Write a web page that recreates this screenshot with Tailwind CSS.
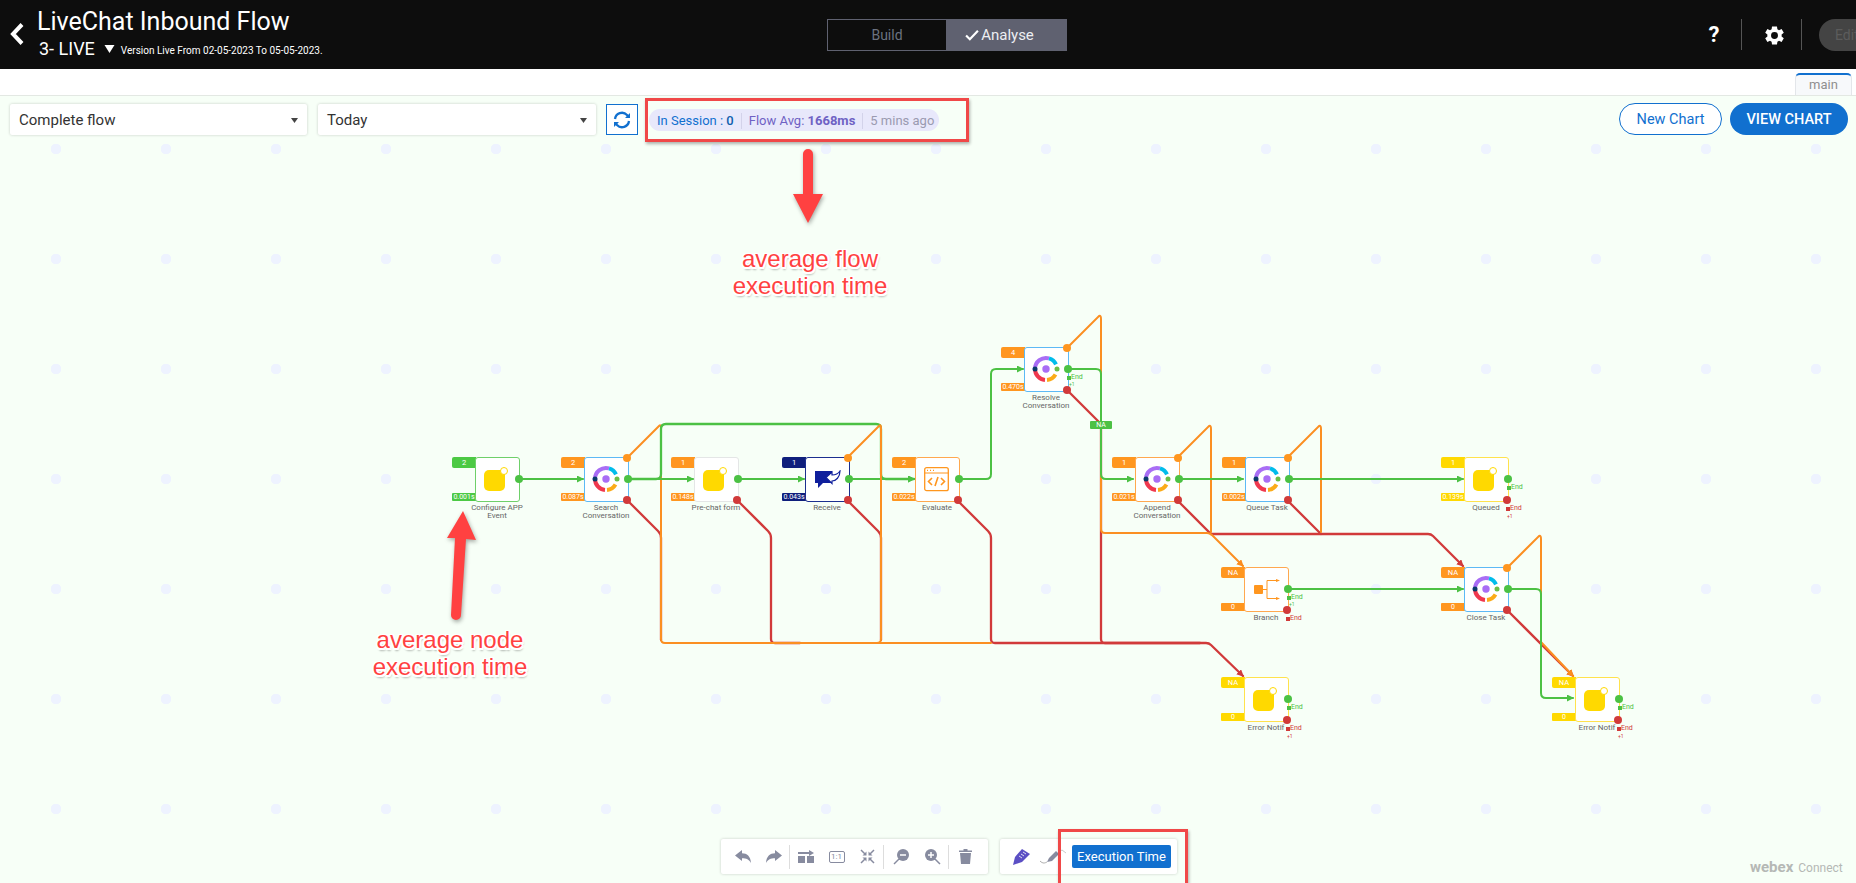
<!DOCTYPE html>
<html lang="en">
<head>
    <meta charset="UTF-8">
    <meta name="viewport" content="width=device-width, initial-scale=1.0">
    <title>LiveChat Inbound Flow</title>
    <script src="https://cdn.jsdelivr.net/npm/@tailwindcss/browser@4"></script>
</head>
<body class="bg-white h-[883px] w-[1856px] overflow-hidden flex flex-col font-['Roboto',sans-serif]">
    <!-- Header -->
    <header class="h-[69px] bg-[#0d0d0d] flex items-start text-white shrink-0">
        <div class="w-[827px] flex items-start shrink-0">
            <svg class="w-[14px] h-[22px] ml-[10px] mt-[23px]" viewBox="0 0 14 22" fill="none" stroke="#fff" stroke-width="4"><path d="M12 1.500 3 11l9 9.500"/></svg>
            <div class="ml-[13px]">
                <h1 class="text-[25px] leading-[30px] mt-[7px] whitespace-nowrap">LiveChat Inbound Flow</h1>
                <div class="flex items-center mt-[2px] ml-[2px]">
                    <span class="text-[18px] leading-[20px] whitespace-nowrap">3- LIVE</span>
                    <svg class="w-[11px] h-[8px] ml-[9px]" viewBox="0 0 10 8" fill="#fff"><path d="M0 0h10L5 8z"/></svg>
                    <span class="text-[10px] ml-[6px] mt-[2px] whitespace-nowrap">Version Live From 02-05-2023 To 05-05-2023.</span>
                </div>
            </div>
        </div>
        <div class="mt-[19px] w-[240px] h-[32px] flex text-[14px] border border-[#5f6170]">
            <div class="w-[118px] flex items-center justify-center text-[#6b7280]">Build</div>
            <div class="flex-1 flex items-center justify-center bg-[#5f6170] text-[#eceef2] text-[15px] gap-[2px] pr-[13px]">
                <svg class="w-[14px] h-[12px]" viewBox="0 0 13 11" fill="none" stroke="#fff" stroke-width="2"><path d="M1 6l3.500 3.500L12 1.500"/></svg>
                Analyse
            </div>
        </div>
        <div class="flex-1 flex items-start justify-end">
            <span class="mt-[23px] text-[22px] leading-[24px] font-bold w-[16px] text-center">?</span>
            <div class="w-px h-[31px] bg-[#555] mt-[19px] ml-[19px]"></div>
            <svg class="w-[23px] h-[23px] mt-[24px] ml-[21px]" viewBox="0 0 24 24" fill="#fff"><path d="M19.400 13a7.600 7.600 0 0 0 0-2l2.300-1.800-2.300-3.900-2.700 1.100a7.500 7.500 0 0 0-1.700-1L14.600 2.500H9.400L9 5.400a7.500 7.500 0 0 0-1.700 1L4.600 5.300 2.300 9.200 4.600 11a7.600 7.600 0 0 0 0 2l-2.300 1.800 2.300 3.900 2.700-1.100c.5.400 1.100.8 1.700 1l.4 2.900h5.200l.4-2.900c.6-.2 1.200-.6 1.700-1l2.700 1.100 2.300-3.900zM12 15.600a3.600 3.600 0 1 1 0-7.200 3.600 3.600 0 0 1 0 7.200z"/></svg>
            <div class="w-px h-[31px] bg-[#555] mt-[19px] ml-[15px]"></div>
            <div class="mt-[19px] ml-[17px] w-[37px] h-[32px] rounded-l-[16px] bg-[#444] text-[#5c5c5c] text-[14px] leading-[32px] pl-[16px] overflow-hidden whitespace-nowrap">Edit</div>
        </div>
    </header>

    <!-- Tab strip -->
    <div class="h-[27px] shrink-0 bg-white border-b border-[#e3e8e3] flex justify-end items-end pr-[4px]">
        <div class="w-[57px] h-[22px] border-t-2 border-x border-t-[#1170cf] border-x-[#e3e6ea] rounded-t-[5px] bg-[#f7f9fb] text-[#8f8f8f] text-[13px] leading-[20px] text-center">main</div>
    </div>

    <!-- Canvas -->
    <main id="canvas" class="relative flex-1 bg-[#f7fff7] bg-[radial-gradient(circle,#eef3ff_5px,transparent_5.500px)] bg-[size:110px_110px] bg-[position:1px_-2px] overflow-hidden">
        <div class="flex items-start pt-[8px] pl-[10px] pr-[8px]">
            <div class="w-[297px] h-[31px] bg-white shadow-[0_0_3px_rgba(0,0,0,0.2)] rounded-[2px] flex items-center justify-between pl-[9px] pr-[9px] pt-[2px] text-[15px] text-[#333]">
                Complete flow
                <svg class="w-[7px] h-[5px]" viewBox="0 0 7 5" fill="#444"><path d="M0 0h7L3.500 5z"/></svg>
            </div>
            <div class="w-[278px] h-[31px] ml-[11px] bg-white shadow-[0_0_3px_rgba(0,0,0,0.2)] rounded-[2px] flex items-center justify-between pl-[9px] pr-[9px] pt-[2px] text-[15px] text-[#333]">
                Today
                <svg class="w-[7px] h-[5px]" viewBox="0 0 7 5" fill="#444"><path d="M0 0h7L3.500 5z"/></svg>
            </div>
            <div class="w-[32px] h-[31px] ml-[10px] bg-white border border-[#1170cf] flex items-center justify-center">
                <svg class="w-[20px] h-[20px]" viewBox="0 0 20 20" fill="none" stroke="#1170cf" stroke-width="2.300"><path d="M3 9a7 7 0 0 1 12-4l1.500 2"/><path d="M17 11a7 7 0 0 1-12 4l-1.500-2"/><path d="M13 8h5V3z" fill="#1170cf" stroke="none"/><path d="M7 12H2v5z" fill="#1170cf" stroke="none"/></svg>
            </div>
            <div class="w-[290px] h-[22px] ml-[11px] mt-[5px] pt-px rounded-full bg-[#e8e8fb] flex items-center pl-[8px] text-[13px] whitespace-nowrap">
                <span class="text-[#1170cf]">In Session : <b class="text-[#0f5fae] font-medium">0</b></span>
                <span class="w-px h-[16px] bg-[#d3d3ea] mx-[7px]"></span>
                <span class="text-[#6f62c4]">Flow Avg: <b class="font-bold">1668ms</b></span>
                <span class="w-px h-[16px] bg-[#d3d3ea] mx-[7px]"></span>
                <span class="text-[#9a9ab0]">5 mins ago</span>
            </div>
            <button class="ml-auto w-[103px] h-[32px] -mt-[1px] pt-px rounded-full border border-[#1170cf] bg-white text-[#1170cf] text-[14.500px]">New Chart</button>
            <button class="ml-[8px] w-[118px] h-[32px] -mt-[1px] pt-px rounded-full bg-[#1170cf] text-white text-[14.500px] font-medium">VIEW CHART</button>
        </div>

        <!-- Connectors -->
        <svg class="absolute inset-0 w-[1856px] h-[787px]" viewBox="0 96 1856 787" fill="none" stroke-linecap="round">
            <defs>
                <marker id="ag" markerUnits="userSpaceOnUse" markerWidth="8" markerHeight="8" refX="6" refY="3.500" orient="auto"><path d="M0 0 7 3.500 0 7z" fill="#4cc144"/></marker>
                <marker id="ao" markerUnits="userSpaceOnUse" markerWidth="8" markerHeight="8" refX="6" refY="3.500" orient="auto"><path d="M0 0 7 3.500 0 7z" fill="#fb8c1e"/></marker>
                <marker id="ar" markerUnits="userSpaceOnUse" markerWidth="8" markerHeight="8" refX="6" refY="3.500" orient="auto"><path d="M0 0 7 3.500 0 7z" fill="#d13a3a"/></marker>
            </defs>
            <!-- failure paths -->
            <g stroke="#d13a3a" stroke-width="2.300">
                <path d="M627 500 658 531Q661 534 661 538V640"/>
                <path d="M737 500 768 531Q771 534 771 538V639Q771 643 775 643H800"/>
                <path d="M847 500 878 531Q881 534 881 538V640"/>
                <path d="M957 500 988 531Q991 534 991 538V639Q991 643 995 643H1206Q1209 643 1211 645L1243 676" marker-end="url(#ar)"/>
                <path d="M1067 390 1098 421Q1101 424 1101 428V639Q1101 643 1105 643H1200"/>
                <path d="M1177 500 1211 534H1428Q1431 534 1433 536L1463 566" marker-end="url(#ar)"/>
                <path d="M1287 500 1321 534"/>
                <path d="M1507 610 1573 676" marker-end="url(#ar)"/>
            </g>
            <!-- timeout paths -->
            <g stroke="#fb8f22" stroke-width="2">
                <path d="M627 458 659 426Q661 424 661 428V639Q661 643 665 643H991"/>
                <path d="M1067 348 1099 316Q1101 315 1101 319V529Q1101 533 1105 533H1207Q1210 533 1212 535L1243 566" marker-end="url(#ao)"/>
                <path d="M1177 458 1209 426Q1211 425 1211 429V532"/>
                <path d="M1287 458 1319 426Q1321 425 1321 429V532"/>
                <path d="M1507 568 1539 536Q1541 535 1541 539V642L1573 676" marker-end="url(#ao)"/>
            </g>
            <!-- success paths -->
            <g stroke="#4cc144" stroke-width="2">
                <path d="M518 479H583" marker-end="url(#ag)"/>
                <path d="M628 479H693" marker-end="url(#ag)"/>
                <path d="M628 479H656Q661 479 661 474V429Q661 424 666 424H876Q881 424 881 429V474Q881 479 886 479H914" stroke-width="2.300" marker-end="url(#ag)"/>
                <path d="M738 479H804" marker-end="url(#ag)"/>
                <path d="M848 479H914" marker-end="url(#ag)"/>
                <path d="M958 479H986Q991 479 991 474V374Q991 369 996 369H1023" marker-end="url(#ag)"/>
                <path d="M1068 369H1096Q1101 369 1101 374V474Q1101 479 1106 479H1133" marker-end="url(#ag)"/>
                <path d="M1178 479H1243" marker-end="url(#ag)"/>
                <path d="M1288 479H1463" marker-end="url(#ag)"/>
                <path d="M1288 589H1463" marker-end="url(#ag)"/>
                <path d="M1508 589H1536Q1541 589 1541 594V693Q1541 698 1546 698H1573" marker-end="url(#ag)"/>
            </g>
            <g stroke="#fb8f22" stroke-width="2">
                <path d="M847 458 879 426Q881 424 881 428V639Q881 643 877 643"/>
                <path d="M1101 479V529"/>
            </g>
        </svg>

        <!-- Nodes -->
        <div id="nodes"></div>

        <span class="absolute left-[1090px] top-[325px] w-[22px] h-[8px] bg-[#4cc144] rounded-[1px] text-white text-[7px] leading-[8px] text-center">NA</span>

        <!-- Annotations -->
        <svg class="absolute inset-0 w-[1856px] h-[787px] drop-shadow-[1px_2px_2px_rgba(0,0,0,0.35)]" viewBox="0 96 1856 787" fill="#ff4141">
            <path d="M803 154a5 5 0 0 1 10 0V194h10L808 223 793 194h10z"/>
            <path d="M463 511 476 540 466 539 461 615a5 5 0 0 1-10 0L455 538 447 538z"/>
        </svg>
        <div class="absolute left-[645px] top-[2px] w-[324px] h-[44px] border-[3px] border-[#f04848] shadow-[1px_2px_3px_rgba(0,0,0,0.3)]"></div>
        <div class="absolute left-[660px] top-[149px] w-[300px] text-center font-['Liberation_Sans',sans-serif] text-[24px] leading-[27px] text-[#ff4141] [text-shadow:1.500px_0_0_#fff,-1.500px_0_0_#fff,0_1.500px_0_#fff,0_-1.500px_0_#fff,1.500px_1.500px_0_#fff,-1.500px_1.500px_0_#fff,1.500px_-1.500px_0_#fff,-1.500px_-1.500px_0_#fff,1px_3px_2px_rgba(0,0,0,0.3)]">average flow<br>execution time</div>
        <div class="absolute left-[300px] top-[530px] w-[300px] text-center font-['Liberation_Sans',sans-serif] text-[24px] leading-[27px] text-[#ff4141] [text-shadow:1.500px_0_0_#fff,-1.500px_0_0_#fff,0_1.500px_0_#fff,0_-1.500px_0_#fff,1.500px_1.500px_0_#fff,-1.500px_1.500px_0_#fff,1.500px_-1.500px_0_#fff,-1.500px_-1.500px_0_#fff,1px_3px_2px_rgba(0,0,0,0.3)]">average node<br>execution time</div>

        <!-- Toolbar -->
        <div class="absolute left-[721px] top-[743px] flex gap-[12px]">
            <div class="w-[267px] h-[35px] bg-white shadow-[0_0_3px_rgba(0,0,0,0.2)] rounded-[2px] flex items-center pl-[6px]">
                <div class="w-[31px] flex justify-center"><svg class="w-[16px] h-[13px]" viewBox="0 0 16 13" fill="#878b9f"><path d="M0 5.500 7 0v3.300c5 0 8.500 3 9 9.700-2-3.500-4.500-4.800-9-4.800V11z"/></svg></div>
                <div class="w-[31px] flex justify-center"><svg class="w-[16px] h-[13px]" viewBox="0 0 16 13" fill="#878b9f"><path d="M16 5.500 9 0v3.300c-5 0-8.500 3-9 9.700 2-3.500 4.500-4.800 9-4.800V11z"/></svg></div>
                <div class="w-px h-[24px] bg-[#ddd]"></div>
                <div class="w-[31px] flex justify-center"><svg class="w-[16px] h-[13px]" viewBox="0 0 16 13" fill="#878b9f"><path d="M0 2h11V0l5 3-5 3V4H0zM0 6h7v7H0zM9 6h7v7H9z"/></svg></div>
                <div class="w-[31px] flex justify-center"><span class="w-[16px] h-[12px] rounded-[2px] border border-[#878b9f] text-[#878b9f] text-[8px] leading-[10px] text-center">1:1</span></div>
                <div class="w-[31px] flex justify-center"><svg class="w-[15px] h-[15px]" viewBox="0 0 15 15" fill="#878b9f" stroke="#878b9f"><path d="M1 1l4 4M14 1l-4 4M1 14l4-4M14 14l-4-4" fill="none" stroke-width="1.500"/><path d="M6.500 6.500H2.500l4-4zM8.500 6.500h4l-4-4zM6.500 8.500h-4l4 4zM8.500 8.500h4l-4 4z" stroke="none"/></svg></div>
                <div class="w-px h-[24px] bg-[#ddd]"></div>
                <div class="w-[33px] flex justify-center"><svg class="w-[16px] h-[16px]" viewBox="0 0 16 16"><path d="M6 10 1 15" stroke="#878b9f" stroke-width="1.500"/><circle cx="10" cy="6" r="6" fill="#878b9f"/><path d="M7 6h6" stroke="#fff" stroke-width="1.500"/></svg></div>
                <div class="w-[31px] flex justify-center"><svg class="w-[16px] h-[16px]" viewBox="0 0 16 16"><path d="M10 10l5 5" stroke="#878b9f" stroke-width="1.500"/><circle cx="6" cy="6" r="6" fill="#878b9f"/><path d="M3 6h6M6 3v6" stroke="#fff" stroke-width="1.500"/></svg></div>
                <div class="w-px h-[24px] bg-[#ddd]"></div>
                <div class="w-[33px] flex justify-center"><svg class="w-[13px] h-[15px]" viewBox="0 0 13 15" fill="#878b9f"><path d="M0 1.500h4.500V0h4v1.500H13V3H0zM1 4h11l-1 11H2z"/></svg></div>
            </div>
            <div class="w-[177px] h-[35px] bg-white shadow-[0_0_3px_rgba(0,0,0,0.2)] rounded-[2px] flex items-center pl-[13px]">
                <svg class="w-[17px] h-[16px]" viewBox="0 0 17 16"><path d="M0 16 2 8 9 0 17 5 9 13z" fill="#5b4fc4"/><path d="M6 7l3 2M8 5l3 2M10 3l3 2" stroke="#fff" stroke-width=".8"/></svg>
                <svg class="w-[26px] h-[15px] ml-[10px]" viewBox="0 0 26 15" fill="none"><path d="M0 12c3 3 5 2 7 1" stroke="#999" stroke-width=".8"/><path d="M7 13l2-4 7-7 3 3-7 7z" fill="#878b9f"/><path d="M19 3l3-2 4 3" stroke="#bbb" stroke-width=".8"/></svg>
                <button class="w-[99px] h-[23px] ml-[6px] rounded-[2px] bg-[#1170cf] text-white text-[13px]">Execution Time</button>
            </div>
        </div>
        <div class="absolute left-[1058px] top-[733px] w-[130px] h-[60px] border-[3px] border-[#f04848] shadow-[1px_2px_3px_rgba(0,0,0,0.3)]"></div>

        <div class="absolute left-[1750px] top-[762px] flex items-baseline gap-[5px] text-[#b5b8b5] whitespace-nowrap"><b class="font-bold text-[15px] leading-[18px]">webex</b><span class="text-[12px] leading-[18px]">Connect</span></div>
    </main>

    <script>
        // Node colour sets
        const themes = {
            green: { box: 'border-[#6fd06a]', tag: 'bg-[#4cc944]' },
            blue: { box: 'border-[#5db9f5]', tag: 'bg-[#ff961f]' },
            gray: { box: 'border-[#e4e6e6]', tag: 'bg-[#ff961f]' },
            navy: { box: 'border-[#1c2f8f]', tag: 'bg-[#0f1f7c]' },
            orange: { box: 'border-[#ffa84f]', tag: 'bg-[#ff961f]' },
            yellow: { box: 'border-[#ffe24d]', tag: 'bg-[#ffd900]' }
        };

        // Node icons
        const icons = {
            square: `<svg class="absolute left-[8px] top-[10px] w-[28px] h-[26px]" viewBox="0 0 28 26"><rect x="1" y="3" width="21" height="21" rx="5" fill="#ffd900"/><circle cx="21" cy="4" r="3.500" fill="#fff" stroke="#ffd900"/></svg>`,
            webex: `<svg class="absolute left-[7px] top-[7px] w-[30px] h-[30px]" viewBox="-15 -15 30 30" fill="none" stroke-width="4"><path d="M-11 0A11 11 0 0 1 3 -10.600" stroke="#a96df5"/><path d="M3 -10.600A11 11 0 0 1 10 -4.600" stroke="#00bceb"/><path d="M-11 0A11 11 0 0 0 -1 11" stroke="#f0384e"/><path d="M1 11A11 11 0 0 0 9.500 5.500" stroke="#fbab18"/><circle cx="-11" cy="0" r="2.500" fill="#0a3a6a" stroke="none"/><circle r="3.700" fill="#a96df5" stroke="none"/><circle cx="11" cy="0" r="2.500" fill="#6cbe45" stroke="none"/></svg>`,
            receive: `<svg class="absolute left-[9px] top-[13px] w-[27px] h-[18px]" viewBox="0 0 27 18"><path d="M1 1H18V13H9L4 18V13H1z" fill="#0f1f9c"/><path d="M12 7.500 18 2V5C21 5 24 4 26 1 26 7 22 11 18 11V13.500z" fill="#fff" stroke="#0f1f9c" stroke-width="1.200"/></svg>`,
            code: `<svg class="absolute left-[9px] top-[10px] w-[25px] h-[25px]" viewBox="0 0 25 25" fill="none" stroke="#ff961f"><rect x=".7" y=".7" width="23.600" height="23" rx="2" stroke-width="1.300"/><path d="M.7 6h23.600"/><path d="M3 3.300h1M6 3.300h1M9 3.300h1" stroke-width="1.300"/><path d="M8 11l-3.500 3.500L8 18M17 11l3.500 3.500L17 18M14 10l-3 9" stroke-width="1.600"/></svg>`,
            branch: `<svg class="absolute left-[9px] top-[12px] w-[28px] h-[21px]" viewBox="0 0 28 21"><rect x="1" y="6" width="9" height="9" rx="1" fill="#ff961f"/><path d="M10 10.500h4M14 1.500v18M14 1.500h10M14 19.500h10" stroke="#ff961f" fill="none"/><path d="M23 0l4 1.500-4 1.500zM23 18l4 1.500-4 1.500z" fill="#ff961f"/></svg>`
        };

        const nodes = [
            { x: 475, y: 457, theme: 'green', icon: 'square', top: '2', bottom: '0.001s', label: 'Configure APP<br>Event', ports: 'g' },
            { x: 584, y: 457, theme: 'blue', icon: 'webex', top: '2', bottom: '0.087s', label: 'Search<br>Conversation', ports: 'ogr' },
            { x: 694, y: 457, theme: 'gray', icon: 'square', top: '1', bottom: '0.148s', label: 'Pre-chat form', ports: 'gr' },
            { x: 805, y: 457, theme: 'navy', icon: 'receive', top: '1', bottom: '0.043s', label: 'Receive', ports: 'ogr' },
            { x: 915, y: 457, theme: 'orange', icon: 'code', top: '2', bottom: '0.022s', label: 'Evaluate', ports: 'gr' },
            { x: 1024, y: 347, theme: 'blue', icon: 'webex', top: '4', bottom: '0.470s', label: 'Resolve<br>Conversation', ports: 'ogr', end: 'g+' },
            { x: 1135, y: 457, theme: 'orange', icon: 'webex', top: '1', bottom: '0.021s', label: 'Append<br>Conversation', ports: 'ogr' },
            { x: 1245, y: 457, theme: 'blue', icon: 'webex', top: '1', bottom: '0.002s', label: 'Queue Task', ports: 'ogr' },
            { x: 1464, y: 457, theme: 'yellow', icon: 'square', top: '1', bottom: '0.139s', label: 'Queued', ports: 'gr', end: 'gr+' },
            { x: 1244, y: 567, theme: 'orange', icon: 'branch', top: 'NA', bottom: '0', label: 'Branch', ports: 'gr', end: 'g+r' },
            { x: 1464, y: 567, theme: 'blue', icon: 'webex', top: 'NA', bottom: '0', label: 'Close Task', ports: 'ogr' },
            { x: 1244, y: 677, theme: 'yellow', icon: 'square', top: 'NA', bottom: '0', label: 'Error Notif', ports: 'gr', end: 'gr+' },
            { x: 1575, y: 677, theme: 'yellow', icon: 'square', top: 'NA', bottom: '0', label: 'Error Notif', ports: 'gr', end: 'gr+' }
        ];

        // Small End markers beside the ports
        function renderEnds(end) {
            if (!end) return '';
            let html = '';
            if (end.startsWith('g')) {
                html += `<span class="absolute left-[43px] top-[29px] w-[4px] h-[4px] bg-[#4cc144]"></span><span class="absolute left-[47px] top-[26px] text-[7px] leading-[8px] text-[#4cc144]">End</span>`;
            }
            if (end.startsWith('g+')) {
                html += `<span class="absolute left-[45px] top-[33px] text-[5px] leading-[8px] text-[#4cc144]">+1</span>`;
            }
            if (end.includes('r')) {
                html += `<span class="absolute left-[42px] top-[50px] w-[4px] h-[4px] bg-[#d13a3a]"></span><span class="absolute left-[46px] top-[47px] text-[7px] leading-[8px] text-[#d13a3a]">End</span>`;
            }
            if (end.endsWith('r+')) {
                html += `<span class="absolute left-[43px] top-[55px] text-[5px] leading-[8px] text-[#d13a3a]">+1</span>`;
            }
            return html;
        }

        function renderNode(node) {
            const theme = themes[node.theme];
            return `
                <div class="absolute w-[45px] h-[45px]" style="left:${node.x}px;top:${node.y - 96}px">
                    <span class="absolute left-[-23px] top-0 w-[24px] h-[11px] rounded-l-[2px] text-white text-[7.500px] leading-[11px] text-center ${theme.tag}">${node.top}</span>
                    <span class="absolute left-[-23px] top-[36px] w-[24px] h-[8px] rounded-l-[1px] text-white text-[7px] leading-[8px] text-center whitespace-nowrap ${theme.tag}">${node.bottom}</span>
                    <div class="absolute inset-0 bg-white border rounded-[3px] ${theme.box}"></div>
                    ${icons[node.icon]}
                    ${node.ports.includes('o') ? '<span class="absolute left-[39px] top-[-3px] w-[8px] h-[8px] rounded-full bg-[#ff961f]"></span>' : ''}
                    <span class="absolute left-[40px] top-[18px] w-[8px] h-[8px] rounded-full bg-[#4cc144]"></span>
                    ${node.ports.includes('r') ? '<span class="absolute left-[39px] top-[39px] w-[8px] h-[8px] rounded-full bg-[#d13a3a]"></span>' : ''}
                    ${renderEnds(node.end)}
                    <div class="absolute left-[-18px] top-[46px] w-[80px] text-center text-[#666] text-[8px] leading-[8px] pt-[1px]">${node.label}</div>
                </div>`;
        }

        document.getElementById('nodes').innerHTML = nodes.map(renderNode).join('');
    </script>
</body>
</html>
